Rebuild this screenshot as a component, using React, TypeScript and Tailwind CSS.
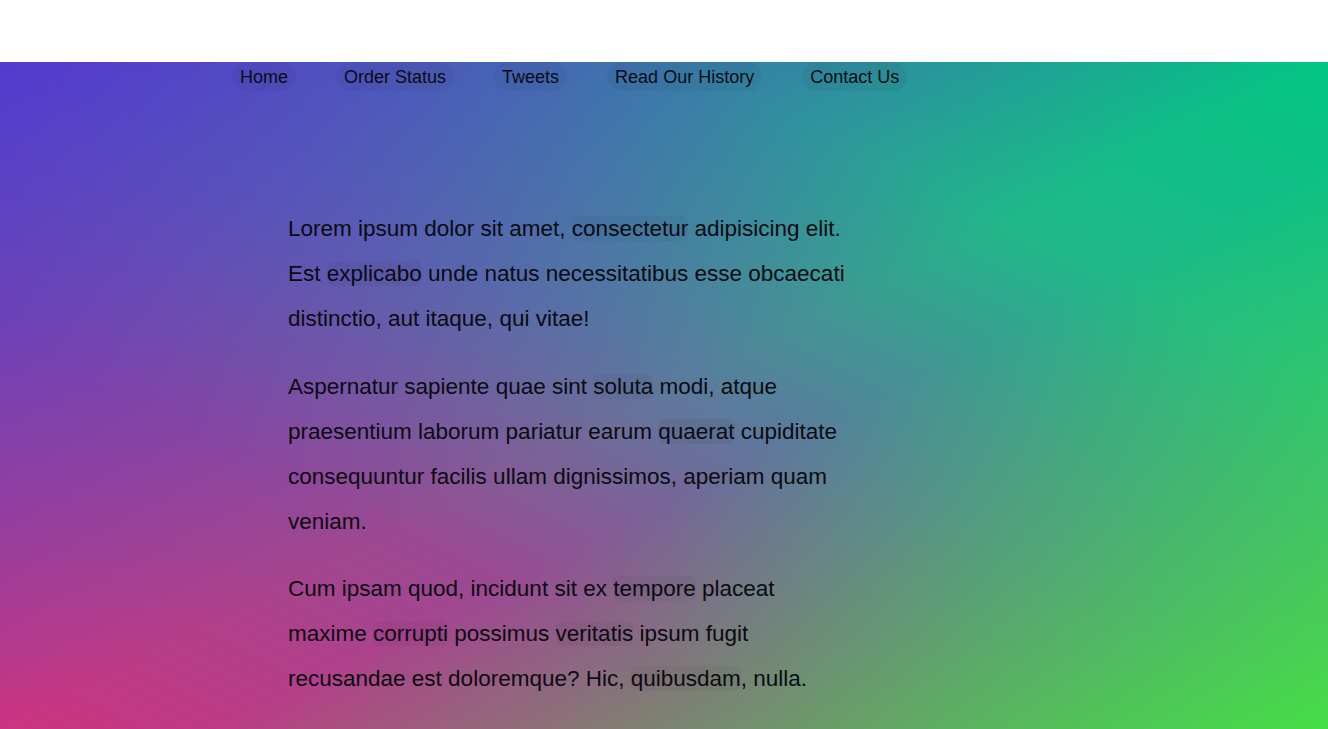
import type { FC, ReactNode } from 'react';

const navLinks = ['Home', 'Order Status', 'Tweets', 'Read Our History', 'Contact Us'];

// faint rounded patch behind a few words
const Mark: FC<{ children: ReactNode }> = ({ children }) => (
    <span className="rounded-md bg-black/[0.035]">{children}</span>
);

const App: FC = () => {
    return (
        <div className="h-screen flex flex-col font-['Liberation_Sans',Arial,sans-serif] text-[#0b0b12]">
            {/* white strip on top */}
            <header className="h-[62px] shrink-0 bg-white" />

            <div className="flex-1 bg-[linear-gradient(to_bottom_right,rgba(84,58,206,1)_0%,rgba(84,58,206,0)_50%,rgba(70,222,70,0)_58%,rgba(70,222,70,1)_100%),linear-gradient(to_top_right,#cc3480_0%,#9a4a92_30%,#5a7c9c_52%,#20b888_76%,#02c583_100%)]">
                {/* Nav */}
                <nav className="flex gap-[40px] pl-[232px]">
                    {navLinks.map((link) => (
                        <a
                            key={link}
                            href="#"
                            className="h-[29px] flex items-center px-2 rounded-full bg-black/[0.04] text-[18px] leading-none"
                        >
                            {link}
                        </a>
                    ))}
                </nav>

                {/* Content */}
                <main className="pl-[288px] pt-[115px]">
                    <div className="w-[566px] flex flex-col gap-[22.5px] text-[22.5px] leading-[2]">
                        <p>
                            Lorem ipsum dolor sit amet, <Mark>consectetur</Mark> adipisicing elit. Est{' '}
                            <Mark>explicabo</Mark> unde natus necessitatibus esse obcaecati distinctio, aut itaque, qui
                            vitae!
                        </p>
                        <p>
                            Aspernatur sapiente quae sint <Mark>soluta</Mark> modi, atque praesentium laborum pariatur
                            earum <Mark>quaerat</Mark> cupiditate consequuntur facilis ullam dignissimos, aperiam quam
                            veniam.
                        </p>
                        <p>
                            Cum ipsam quod, incidunt sit ex <Mark>tempore</Mark> placeat maxime <Mark>corrupti</Mark>{' '}
                            possimus <Mark>veritatis</Mark> ipsum fugit recusandae est doloremque? Hic,{' '}
                            <Mark>quibusdam</Mark>, nulla.
                        </p>
                    </div>
                </main>
            </div>
        </div>
    );
};

export default App;
